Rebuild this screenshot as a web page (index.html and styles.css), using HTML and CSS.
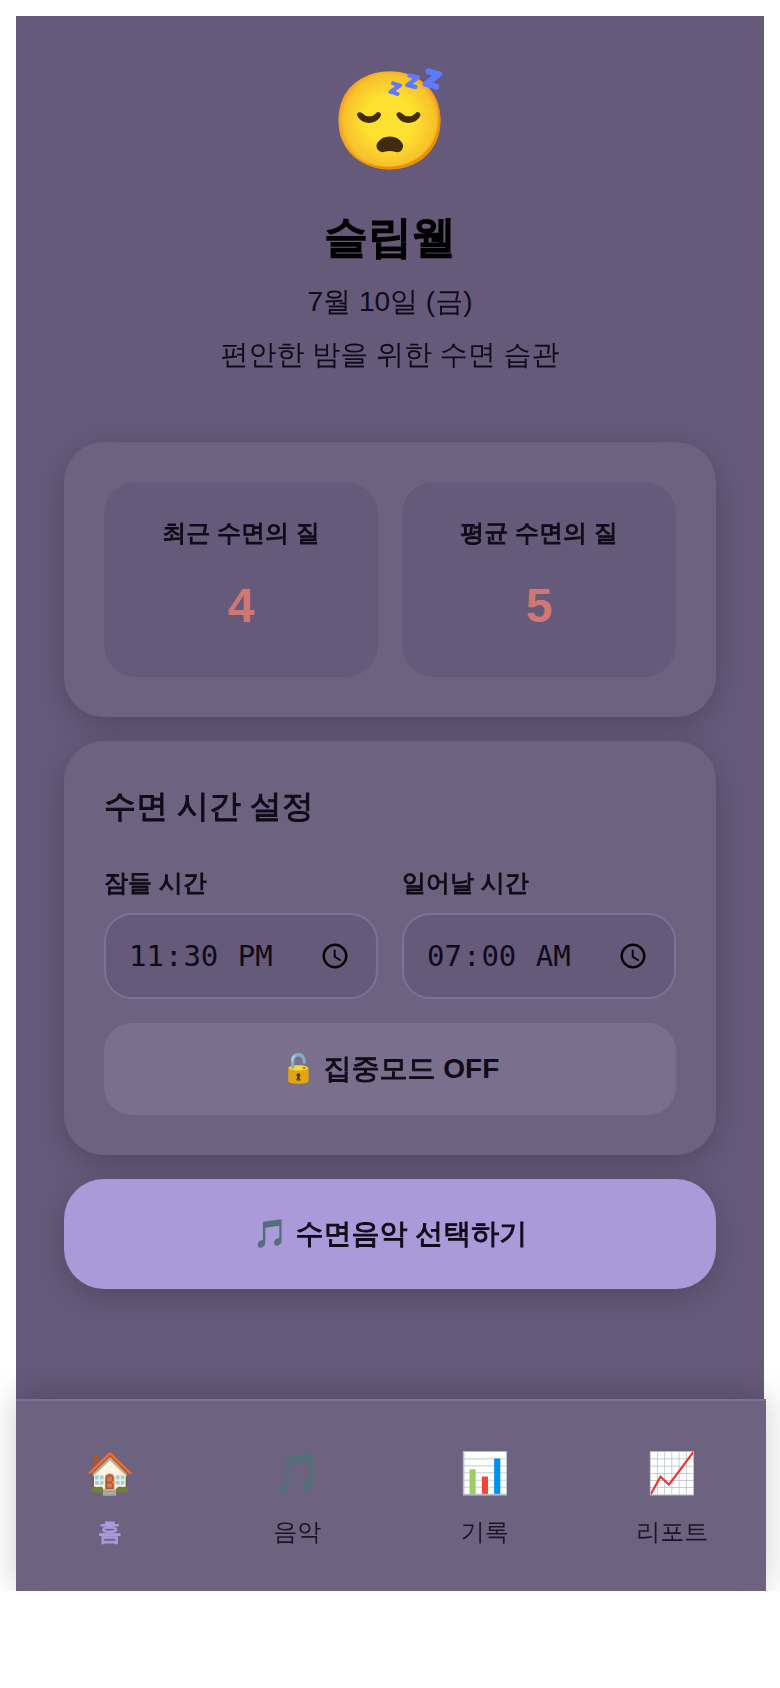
FILE: index.html
```html
<!DOCTYPE html>
<html lang="ko">
<head>
    <meta charset="UTF-8">
    <meta name="viewport" content="width=device-width, initial-scale=1.0">
    <title>슬립웰</title>
    <link rel="stylesheet" href="styles.css">
</head>
<body>
    <div class="app">
        <main class="content">
            <header class="header">
                <div class="logo">😴</div>
                <h1>슬립웰</h1>
                <p>7월 10일 (금)</p>
                <p>편안한 밤을 위한 수면 습관</p>
            </header>

            <section class="card stats">
                <div class="stat">
                    <h3>최근 수면의 질</h3>
                    <div class="score">4</div>
                </div>
                <div class="stat">
                    <h3>평균 수면의 질</h3>
                    <div class="score">5</div>
                </div>
            </section>

            <section class="card">
                <h2>수면 시간 설정</h2>
                <div class="time-row">
                    <div class="time-field">
                        <label for="sleepTime">잠들 시간</label>
                        <input type="time" id="sleepTime" value="23:30">
                    </div>
                    <div class="time-field">
                        <label for="wakeTime">일어날 시간</label>
                        <input type="time" id="wakeTime" value="07:00">
                    </div>
                </div>
                <button type="button" class="focus-btn">🔓 <span class="ko-bold">집중모드</span> OFF</button>
            </section>

            <button type="button" class="music-btn">🎵 <span class="ko-bold">수면음악 선택하기</span></button>
        </main>

        <nav class="bottom-nav">
            <a href="#home" class="nav-item active"><span class="nav-icon">🏠</span><span class="ko-bold">홈</span></a>
            <a href="#music" class="nav-item"><span class="nav-icon">🎵</span>음악</a>
            <a href="#record" class="nav-item"><span class="nav-icon">📊</span>기록</a>
            <a href="#report" class="nav-item"><span class="nav-icon">📈</span>리포트</a>
        </nav>
    </div>
</body>
</html>
```

FILE: styles.css
```css
* {
    box-sizing: border-box;
    margin: 0;
    padding: 0;
}

body {
    padding: 16px;
    background: #ffffff;
    color: #0f0b18;
    font-family: "Liberation Sans", "WenQuanYi Zen Hei", "Noto Sans CJK KR", sans-serif;
    font-size: 28px;
    line-height: 1.6;
}

/* The Korean face has no bold cut, so thicken it */
h1, h2, h3, label, .ko-bold {
    -webkit-text-stroke: 1px currentColor;
}

.app {
    background: #665a7b;
}

.content {
    display: flex;
    flex-direction: column;
    gap: 24px;
    padding: 32px 48px 110px;
}

/* Header */
.header {
    display: flex;
    flex-direction: column;
    align-items: center;
    gap: 8px;
    padding-bottom: 40px;
    text-align: center;
}

.logo {
    font-size: 96px;
    line-height: 146px;
}

h1 {
    color: #000000;
    font-size: 44px;
    -webkit-text-stroke-width: 2px;
}

/* Cards */
.card {
    padding: 40px;
    background: #6d6380;
    border-radius: 40px;
    box-shadow: 0 8px 32px rgba(0, 0, 0, 0.2);
}

.stats {
    display: grid;
    grid-template-columns: 1fr 1fr;
    gap: 24px;
}

.stat {
    display: flex;
    flex-direction: column;
    gap: 16px;
    padding: 32px;
    background: #665a7b;
    border-radius: 32px;
    text-align: center;
}

.stat h3 {
    font-size: 24px;
}

.score {
    color: #d07774;
    font-size: 48px;
    font-weight: bold;
}

h2 {
    margin-bottom: 32px;
    font-size: 32px;
}

.time-row {
    display: grid;
    grid-template-columns: 1fr 1fr;
    gap: 24px;
    margin-bottom: 24px;
}

.time-field label {
    display: block;
    margin-bottom: 10px;
    font-size: 24px;
    font-weight: bold;
}

.time-field input {
    display: block;
    width: 100%;
    height: 86px;
    padding: 0 22px;
    background: #665a7b;
    color: #0f0b18;
    border: 2px solid #7e7099;
    border-radius: 28px;
    font-family: "DejaVu Sans Mono", monospace;
    font-size: 29px;
}

.time-field input::-webkit-calendar-picker-indicator {
    width: 30px;
    height: 30px;
    margin-right: 4px;
    padding: 0;
    background-size: contain;
}

button {
    width: 100%;
    border: none;
    color: #0f0b18;
    font-family: inherit;
    font-size: 28px;
    font-weight: bold;
    cursor: pointer;
}

.focus-btn {
    display: block;
    height: 92px;
    background: #7b6f8e;
    border-radius: 28px;
}

.music-btn {
    height: 110px;
    background: #aa9ad9;
    border-radius: 40px;
    box-shadow: 0 8px 32px rgba(0, 0, 0, 0.2);
}

/* Bottom navigation */
.bottom-nav {
    display: grid;
    grid-template-columns: repeat(4, 1fr);
    margin-right: -2px;
    padding: 40px 0;
    background: #6d6380;
    border-top: 2px solid #7e7099;
    box-shadow: 0 -4px 32px rgba(0, 0, 0, 0.2);
    clip-path: inset(-40px -16px 0 -16px);
}

.nav-item {
    display: flex;
    flex-direction: column;
    align-items: center;
    gap: 8px;
    color: #1b1526;
    font-size: 24px;
    text-decoration: none;
}

.nav-item.active {
    color: #aa9ad9;
    font-weight: bold;
}

.nav-icon {
    font-size: 40px;
    font-weight: normal;
}
```
